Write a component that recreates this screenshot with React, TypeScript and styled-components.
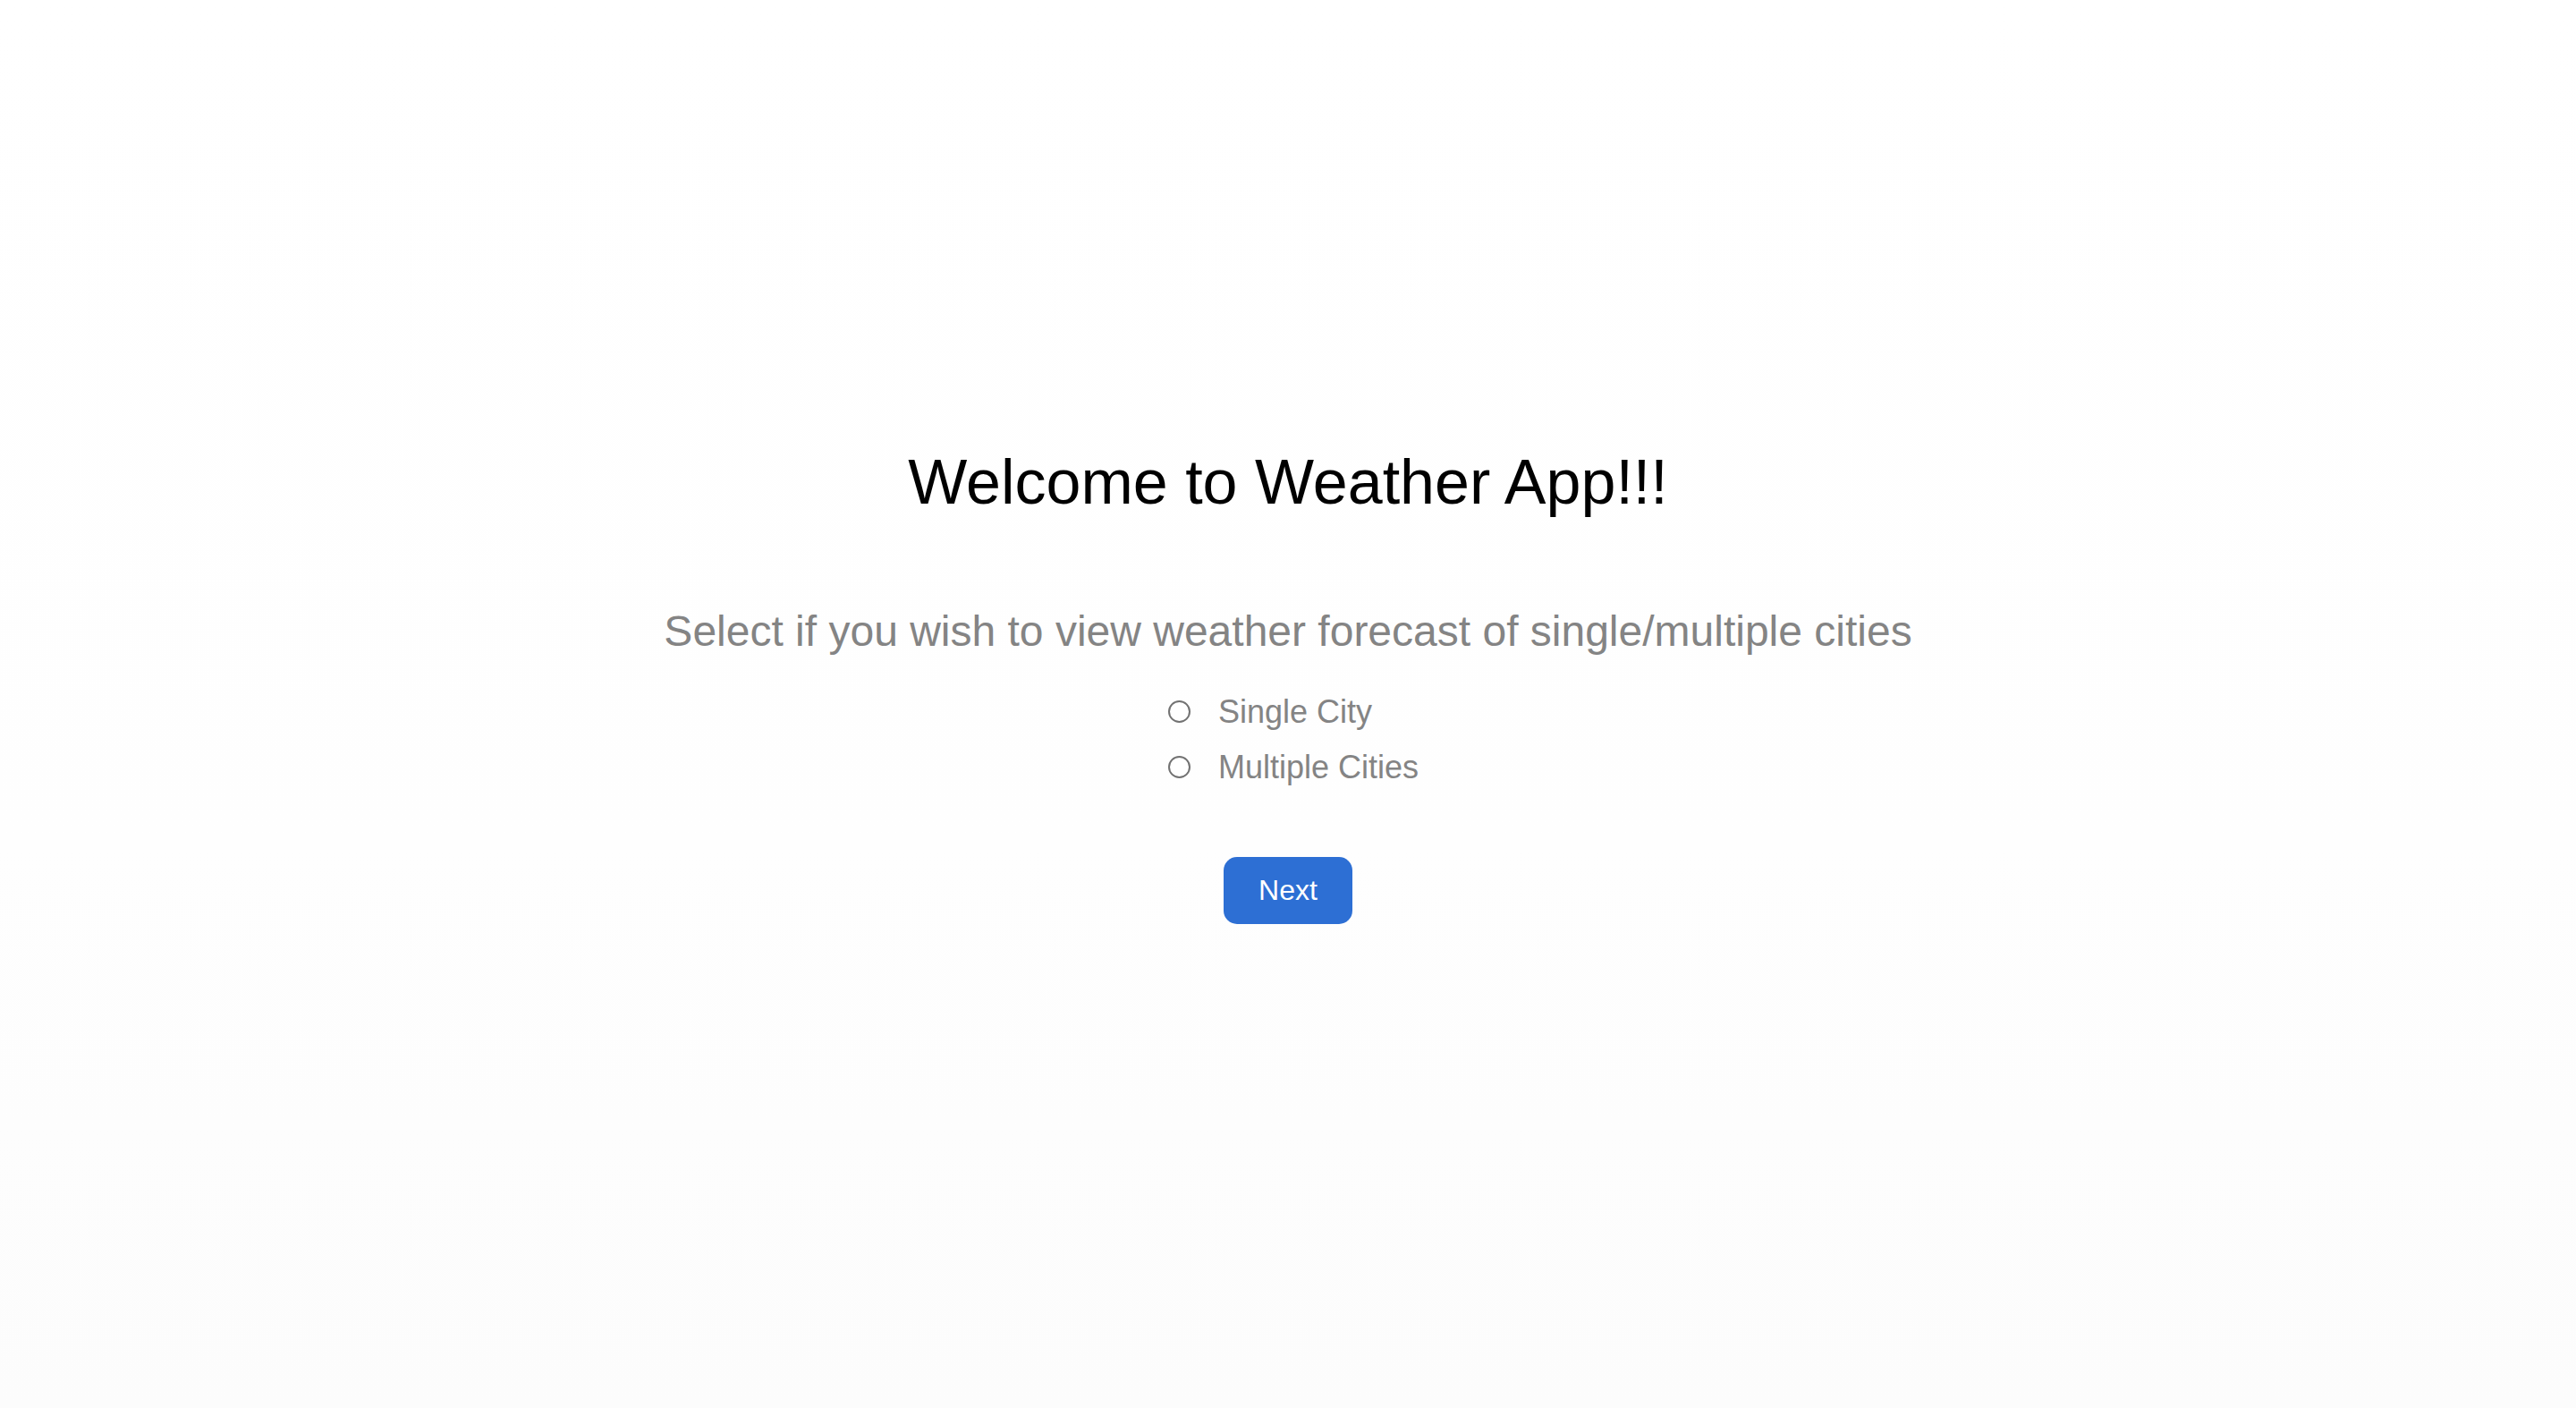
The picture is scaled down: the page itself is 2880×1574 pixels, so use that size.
import React, { useState } from "react";
import styled, { createGlobalStyle } from "styled-components";

const GlobalStyle = createGlobalStyle`
  html, body {
    margin: 0;
    padding: 0;
  }
  body {
    min-height: 100vh;
    background: linear-gradient(180deg, #ffffff 0%, #fefefe 60%, #fcfcfc 100%);
    font-family: "Liberation Sans", Arial, Helvetica, sans-serif;
  }
`;

const Page = styled.main`
  min-height: 100vh;
  display: flex;
  flex-direction: column;
  align-items: center;
  padding-top: 499px;
  box-sizing: border-box;
`;

const Title = styled.h1`
  margin: 0;
  font-size: 70px;
  font-weight: 400;
  line-height: 1.15;
  color: #000000;
`;

const Subtitle = styled.p`
  margin: 98px 0 0;
  font-size: 48px;
  line-height: 1.15;
  color: #848484;
`;

const Options = styled.div`
  margin: 42px 0 0 12px;
  display: flex;
  flex-direction: column;
  gap: 21px;
`;

const OptionRow = styled.label`
  display: flex;
  align-items: center;
  gap: 31px;
  font-size: 36px;
  line-height: 1.15;
  color: #848484;
  cursor: pointer;
`;

const Radio = styled.input.attrs({ type: "radio" })`
  appearance: none;
  -webkit-appearance: none;
  margin: 0;
  width: 25px;
  height: 25px;
  border: 2px solid #727272;
  border-radius: 50%;
  background: #ffffff;
  box-sizing: border-box;
  display: grid;
  place-content: center;
  cursor: pointer;

  &:checked::before {
    content: "";
    width: 13px;
    height: 13px;
    border-radius: 50%;
    background: #2d6fd4;
  }
`;

const NextButton = styled.button`
  margin-top: 80px;
  width: 144px;
  height: 75px;
  border: none;
  border-radius: 15px;
  background: #2d6fd4;
  color: #ffffff;
  font-family: "Liberation Sans", Arial, Helvetica, sans-serif;
  font-size: 32px;
  cursor: pointer;
`;

export default function App() {
  const [choice, setChoice] = useState<string>("");
  return (
    <>
      <GlobalStyle />
      <Page>
        <Title>Welcome to Weather App!!!</Title>
        <Subtitle>Select if you wish to view weather forecast of single/multiple cities</Subtitle>
        <Options>
          <OptionRow>
            <Radio
              name="mode"
              value="single"
              checked={choice === "single"}
              onChange={() => setChoice("single")}
            />
            Single City
          </OptionRow>
          <OptionRow>
            <Radio
              name="mode"
              value="multiple"
              checked={choice === "multiple"}
              onChange={() => setChoice("multiple")}
            />
            Multiple Cities
          </OptionRow>
        </Options>
        <NextButton type="button">Next</NextButton>
      </Page>
    </>
  );
}
